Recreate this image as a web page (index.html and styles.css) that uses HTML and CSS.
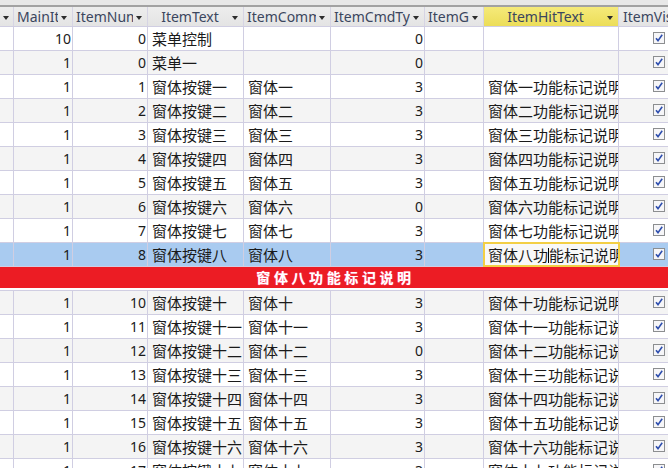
FILE: index.html
```html
<!DOCTYPE html>
<html>
<head>
<meta charset="utf-8">
<link rel="stylesheet" href="styles.css">
</head>
<body>
<div class="sheet">
  <div class="topbar"></div>
  <div class="row head">
    <div class="hc first"><span class="arrow"></span></div>
    <div class="hc"><span class="lbl">MainItemID</span><span class="arrow"></span></div>
    <div class="hc"><span class="lbl">ItemNumber</span><span class="arrow"></span></div>
    <div class="hc"><span class="lbl">ItemText</span><span class="arrow"></span></div>
    <div class="hc"><span class="lbl">ItemCommand</span><span class="arrow"></span></div>
    <div class="hc"><span class="lbl">ItemCmdType</span><span class="arrow"></span></div>
    <div class="hc"><span class="lbl">ItemGroup</span><span class="arrow"></span></div>
    <div class="hc active"><span class="lbl">ItemHitText</span><span class="arrow"></span></div>
    <div class="hc last"><span class="lbl">ItemVisible</span></div>
  </div>
  <div id="rows"></div>
</div>
<script src="app.js"></script>
</body>
</html>
```
FILE: app.js
```js
var num = ["", "一","二","三","四","五","六","七","八","九","十","十一","十二","十三","十四","十五","十六","十七"];
var data = [
  ["10","0","菜单控制","","0",""],
  ["1","0","菜单一","","0",""]
];
var types = {6:"0",12:"0"};
for (var i = 1; i <= 8; i++) {
  data.push(["1", String(i), "窗体按键" + num[i], "窗体" + num[i], types[i] || "3", "窗体" + num[i] + "功能标记说明"]);
}
data.push("banner");
for (var j = 10; j <= 17; j++) {
  data.push(["1", String(j), "窗体按键" + num[j], "窗体" + num[j], types[j] || "3", "窗体" + num[j] + "功能标记说明"]);
}
var check = '<svg class="cb" width="12" height="12" viewBox="0 0 12 12"><rect x="0.5" y="0.5" width="11" height="11" fill="#f6f6f8" stroke="#8c8e90"/><path d="M3 6.2 L5 8.6 L9.2 2.8" fill="none" stroke="#2f4fae" stroke-width="1.6"/></svg>';
var html = "";
data.forEach(function (r, idx) {
  var cls = "row" + (idx % 2 ? " alt" : "");
  if (r === "banner") {
    html += '<div class="row bannerrow"><div class="banner">窗体八功能标记说明</div></div>';
    return;
  }
  var sel = r[1] === "8";
  if (sel) cls += " sel";
  var hit = r[5];
  if (sel) hit = '窗体八功<span class="caret"></span>能标记说明';
  html += '<div class="' + cls + '">' +
    '<div class="c"></div>' +
    '<div class="c n">' + r[0] + '</div>' +
    '<div class="c n">' + r[1] + '</div>' +
    '<div class="c t">' + r[2] + '</div>' +
    '<div class="c t">' + r[3] + '</div>' +
    '<div class="c n">' + r[4] + '</div>' +
    '<div class="c"></div>' +
    '<div class="c t' + (sel ? ' focus' : '') + '">' + hit + '</div>' +
    '<div class="c chk">' + check + '</div>' +
    '</div>';
});
document.getElementById("rows").innerHTML = html;
```
FILE: styles.css
```css
html, body {
  margin: 0;
  padding: 0;
  background: #ffffff;
}
body {
  width: 668px;
  height: 468px;
  overflow: hidden;
  font-family: "Noto Sans", "Noto Sans CJK SC", sans-serif;
}
.sheet {
  width: 668px;
}
.topbar {
  height: 5px;
  background: #e8e8e8;
  border-bottom: 2px solid #a2a2a2;
}
.row {
  display: grid;
  grid-template-columns: 14px 59px 75px 96px 87px 94px 59px 135px 49px;
  height: 24px;
  box-sizing: border-box;
  border-bottom: 1px solid #d0cee2;
  background: #ffffff;
}
.row.alt {
  background: #f4f4f4;
}
.row.sel {
  background: #a9cbf0;
}
.row.head {
  height: 20px;
  background: linear-gradient(#ededed, #e4e4e4);
  border-bottom: 1px solid #d0cee2;
}
.hc {
  display: flex;
  align-items: center;
  border-right: 1px solid #d6d4e4;
  overflow: hidden;
  color: #3b465e;
  font-size: 14px;
  line-height: 19px;
}
.hc .lbl {
  flex: 1;
  min-width: 0;
  overflow: hidden;
  white-space: nowrap;
  text-align: center;
  padding-left: 3px;
}
.hc .arrow {
  flex: none;
  width: 0;
  height: 0;
  border-left: 3.5px solid transparent;
  border-right: 3.5px solid transparent;
  border-top: 4px solid #2c2c2c;
  margin: 2px 5px 0 3px;
}
.hc.first .arrow {
  margin-left: 3px;
}
.hc.active {
  background: linear-gradient(#f5ea7a, #ecdd58);
}
.hc.last {
  border-right: none;
}
.hc.last .lbl {
  padding-left: 4px;
}
.c {
  box-sizing: border-box;
  border-right: 1px solid #d0cee2;
  overflow: hidden;
  white-space: nowrap;
  line-height: 23px;
  color: #1a1a1a;
}
.c.n {
  text-align: right;
  padding-right: 1px;
  font-size: 14px;
}
.c.t {
  padding-left: 4px;
  font-family: "Noto Sans CJK SC", sans-serif;
  font-size: 15px;
}
.c.chk {
  border-right: none;
  padding-left: 34px;
  padding-top: 5px;
}
.cb {
  display: block;
}
.c.focus {
  position: relative;
  z-index: 1;
  background: #f8f8f8;
  outline: 2px solid #f3cf45;
  outline-offset: -1px;
}
.caret {
  display: inline-block;
  width: 1px;
  height: 15px;
  background: #000;
  vertical-align: -2px;
}
.bannerrow {
  display: block;
  background: #ffffff;
}
.banner {
  height: 21px;
  background: #ec1c24;
  color: #ffffff;
  text-align: center;
  font-family: "Noto Sans CJK SC", sans-serif;
  font-weight: 700;
  font-size: 14px;
  line-height: 21px;
  letter-spacing: 3.6px;
  padding-left: 3px;
  text-shadow: 0 0 1px #ff7fb0;
}
```
